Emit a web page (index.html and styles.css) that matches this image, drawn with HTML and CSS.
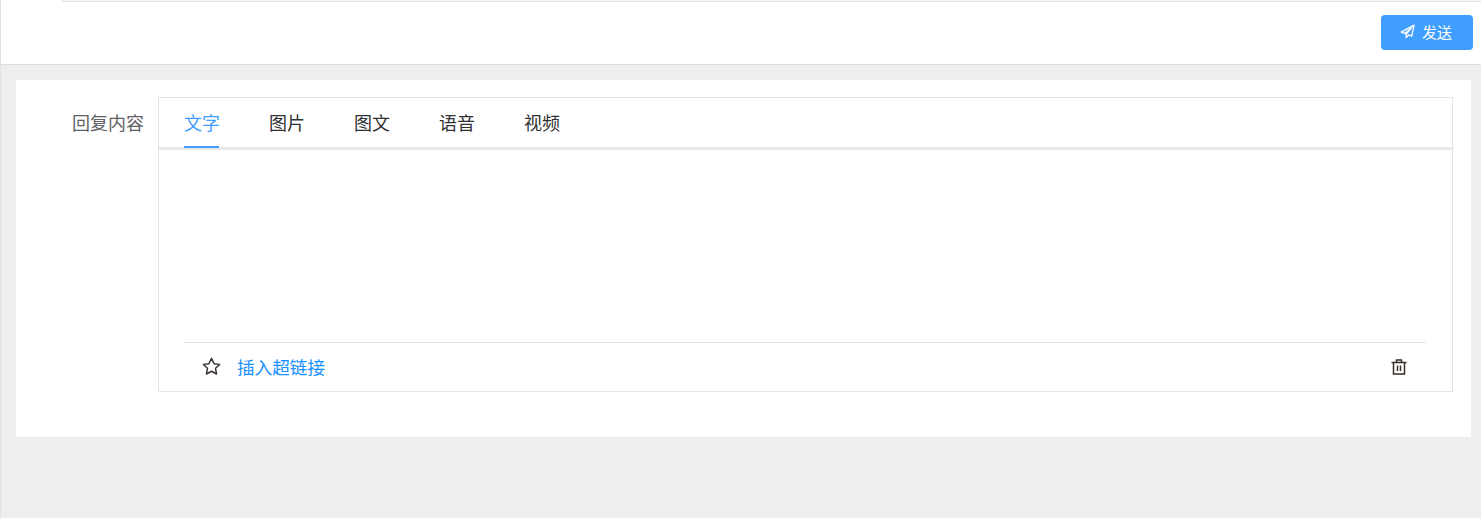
FILE: index.html
```html
<!DOCTYPE html>
<html lang="zh-CN">
<head>
    <meta charset="UTF-8">
    <meta name="viewport" content="width=device-width, initial-scale=1.0">
    <title>回复内容</title>
    <link rel="stylesheet" href="styles.css">
</head>
<body>
    <div class="page">
        <div class="top-tabs">
            <div class="top-tab-active"></div>
            <div class="top-tab-rest"></div>
        </div>
        <div class="toolbar">
            <button class="send-btn" type="button">
                <svg class="send-icon" viewBox="0 0 16 16" width="15" height="15">
                    <path d="M15 1.2 1.2 8.6l3.9 1.5L12.2 4.2 6.6 10.9v3.7l2.5-2.9 3.4 1.3z" fill="none" stroke="#fff" stroke-width="1.4" stroke-linejoin="round"/>
                </svg>
                <span>发送</span>
            </button>
        </div>
        <div class="content">
            <div class="card">
                <div class="form-label">回复内容</div>
                <div class="reply-box">
                    <div class="tabs">
                        <div class="tab active">文字</div>
                        <div class="tab">图片</div>
                        <div class="tab">图文</div>
                        <div class="tab">语音</div>
                        <div class="tab">视频</div>
                    </div>
                    <div class="editor"></div>
                    <div class="footer">
                        <svg class="star-icon" viewBox="0 0 18 18" width="19" height="19">
                            <path d="M9 1.3l2.4 5 5.3.7-3.9 3.7 1 5.4L9 13.5l-4.8 2.6 1-5.4L1.3 7l5.3-.7z" fill="none" stroke="#3c3531" stroke-width="1.4" stroke-linejoin="round"/>
                        </svg>
                        <a class="link" href="#">插入超链接</a>
                        <svg class="trash-icon" viewBox="0 0 16 16" width="16" height="16">
                            <path d="M.5 3.5h15M5.5 3.5V1h5v2.5M2.5 3.5v11.5h11V3.5M6.5 6.5v5.5M9.5 6.5v5.5" fill="none" stroke="#3a2f25" stroke-width="1.5"/>
                        </svg>
                    </div>
                </div>
            </div>
        </div>
    </div>
</body>
</html>
```

FILE: styles.css
```css
* {
    box-sizing: border-box;
}

html, body {
    height: 100%;
}

body {
    margin: 0;
    font-family: "Liberation Sans", "Noto Sans CJK SC", sans-serif;
    background-color: #eee;
    overflow: hidden;
}

.page {
    height: 518px;
    border-left: 1px solid #e2e2e2;
    background-color: #eee;
}

.top-tabs {
    display: flex;
    height: 2px;
    background-color: #fff;
}

.top-tab-active {
    width: 60px;
}

.top-tab-rest {
    flex: 1;
    border-top: 1px solid #f3f3f3;
    border-bottom: 1px solid #e6e6e6;
    border-left: 1px solid #eee;
}

.toolbar {
    display: flex;
    justify-content: flex-end;
    height: 63px;
    padding: 13px 8px 0 0;
    background-color: #fff;
    border-bottom: 1px solid #dcdcdc;
}

.send-btn {
    display: flex;
    align-items: center;
    justify-content: center;
    gap: 7px;
    width: 92px;
    height: 35px;
    padding: 0 2px 2px 0;
    border: none;
    border-radius: 4px;
    background-color: #409eff;
    color: #fff;
    font-family: inherit;
    font-size: 15px;
}

.content {
    padding: 15px 10px 0 15px;
}

.card {
    display: flex;
    height: 357px;
    padding: 17px 18px 0 0;
    background-color: #fff;
}

.form-label {
    width: 142px;
    padding: 16px 14px 0 0;
    text-align: right;
    font-size: 18px;
    line-height: 22px;
    color: #606266;
}

.reply-box {
    flex: 1;
    height: 295px;
    border: 1px solid #e4e4e4;
}

.tabs {
    display: flex;
    gap: 50px;
    height: 52px;
    padding-left: 25px;
    border-bottom: 3px solid #e8e8e8;
}

.tab {
    width: 35px;
    height: 50px;
    padding-top: 14px;
    font-size: 18px;
    line-height: 25px;
    color: #303133;
    white-space: nowrap;
}

.tab.active {
    color: #409eff;
    border-bottom: 2px solid #409eff;
}

.editor {
    height: 192px;
}

.footer {
    display: flex;
    align-items: center;
    height: 48px;
    margin: 0 26px 0 25px;
    padding: 0 19px 0 18px;
    border-top: 1px solid #e4e4e4;
}

.star-icon {
    margin-right: 16px;
}

.link {
    flex: 1;
    font-size: 17.6px;
    color: #1890ff;
    text-decoration: none;
}
```
